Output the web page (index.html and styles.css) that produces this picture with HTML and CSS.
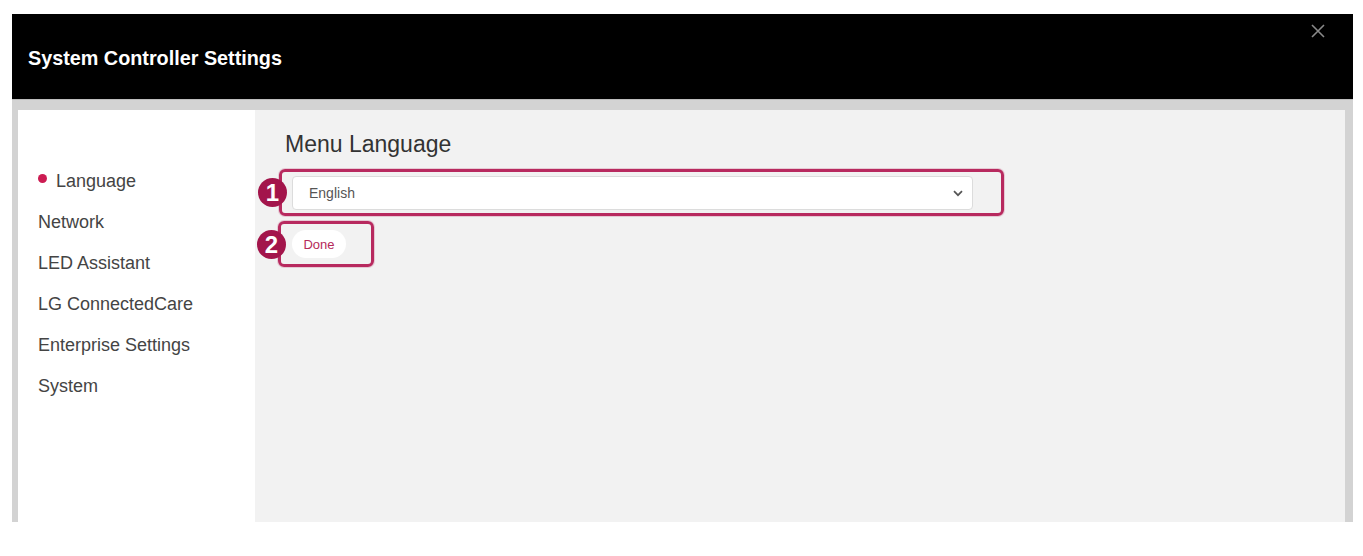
FILE: index.html
```html
<!DOCTYPE html>
<html>
<head>
<meta charset="utf-8">
<link rel="stylesheet" href="styles.css">
</head>
<body>
<div class="window">
  <header class="header">
    <h1 class="title">System Controller Settings</h1>
    <svg class="close" width="14" height="14" viewBox="0 0 14 14"><path d="M1 1L13 13M13 1L1 13" stroke="#8a8a8a" stroke-width="1.6" fill="none"/></svg>
  </header>
  <div class="frame">
    <nav class="sidebar">
      <div class="nav-item active"><span class="dot"></span>Language</div>
      <div class="nav-item">Network</div>
      <div class="nav-item">LED Assistant</div>
      <div class="nav-item">LG ConnectedCare</div>
      <div class="nav-item">Enterprise Settings</div>
      <div class="nav-item">System</div>
    </nav>
    <main class="panel">
      <h2 class="heading">Menu Language</h2>
      <div class="select-row">
        <div class="select">
          <span>English</span>
          <svg class="chev" width="10" height="7" viewBox="0 0 10 7"><path d="M1 1.2L5 5.2L9 1.2" stroke="#555" stroke-width="1.7" fill="none"/></svg>
        </div>
        <div class="mark mark1"></div>
        <div class="badge badge1">1</div>
      </div>
      <div class="done-row">
        <button class="done">Done</button>
        <div class="mark mark2"></div>
        <div class="badge badge2">2</div>
      </div>
    </main>
  </div>
</div>
</body>
</html>
```
FILE: styles.css
```css
html, body {
  margin: 0;
  padding: 0;
  background: #ffffff;
  font-family: "Liberation Sans", Arial, sans-serif;
}
.window {
  margin: 14px 10px 0 12px;
  width: 1341px;
}
.header {
  position: relative;
  background: #000;
  height: 85px;
  display: flex;
  align-items: center;
}
.title {
  margin: 0 0 0 16px;
  padding-top: 4px;
  color: #fff;
  font-size: 19.8px;
  font-weight: bold;
}
.close {
  position: absolute;
  right: 28px;
  top: 10px;
}
.frame {
  background: #d3d3d3;
  border-top: 1px solid #bdbdbd;
  padding: 10px 8px 0 6px;
  display: flex;
  height: 412px;
}
.sidebar {
  background: #fff;
  width: 237px;
  padding-top: 56px;
  box-sizing: border-box;
}
.nav-item {
  position: relative;
  padding-left: 20px;
  height: 41px;
  line-height: 30px;
  font-size: 18px;
  color: #444;
}
.nav-item.active {
  padding-left: 38px;
}
.dot {
  position: absolute;
  left: 20px;
  top: 8px;
  width: 9px;
  height: 9px;
  border-radius: 50%;
  background: #cc1c52;
}
.panel {
  flex: 1;
  background: #f2f2f2;
  padding: 20px 0 0 30px;
}
.heading {
  margin: 0 0 18px 0;
  font-size: 23px;
  font-weight: normal;
  color: #333;
  line-height: 28px;
}
.select-row {
  position: relative;
  height: 34px;
  margin-left: 7px;
  width: 681px;
}
.select {
  box-sizing: border-box;
  height: 34px;
  background: #fff;
  border: 1px solid #dcdcdc;
  border-radius: 4px;
  display: flex;
  align-items: center;
  justify-content: space-between;
  padding: 0 9px 0 16px;
  font-size: 14px;
  color: #555;
}
.chev {
  margin-top: 1px;
}
.done-row {
  position: relative;
  margin: 20px 0 0 7px;
  height: 28px;
}
.done {
  height: 28px;
  width: 54px;
  border: none;
  border-radius: 14px;
  background: #fff;
  color: #b52a5a;
  font-family: "Liberation Sans", Arial, sans-serif;
  font-size: 13px;
  padding: 0;
}
.mark {
  position: absolute;
  border: 3px solid #b82a5f;
  border-radius: 6px;
  box-shadow: 0 0 0 1px rgba(184,42,95,0.2);
}
.mark1 {
  left: -13px;
  top: -7px;
  width: 719px;
  height: 41px;
}
.mark2 {
  left: -14px;
  top: -9px;
  width: 90px;
  height: 40px;
}
.badge {
  position: absolute;
  width: 29px;
  height: 29px;
  border-radius: 50%;
  background: #a3154b;
  color: #fff;
  font-weight: bold;
  font-size: 24px;
  line-height: 29px;
  text-align: center;
}
.badge1 {
  left: -34px;
  top: 2px;
}
.badge2 {
  left: -35px;
  top: 0px;
}
```
